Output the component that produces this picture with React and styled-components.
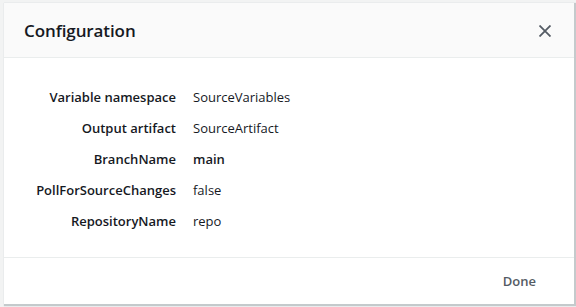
import React from "react";
import styled, { createGlobalStyle } from "styled-components";

const Global = createGlobalStyle`
  html, body {
    margin: 0;
    padding: 0;
    background: #f2f3f3;
    font-family: "Open Sans", "Liberation Sans", Arial, sans-serif;
  }
`;

const Page = styled.div`
  width: 576px;
  height: 307px;
  padding: 3px 2px 0 4px;
  box-sizing: border-box;
`;

const Modal = styled.div`
  width: 570px;
  height: 301px;
  background: #fff;
  display: flex;
  flex-direction: column;
  box-shadow: 1px 1px 1px 1px #c4cacc;
`;

const Header = styled.div`
  height: 55px;
  box-sizing: border-box;
  background: #fafafa;
  border-bottom: 1px solid #eaeded;
  display: flex;
  align-items: center;
  justify-content: space-between;
  padding: 1px 23px 0 20px;
`;

const Title = styled.h2`
  margin: 0;
  font-size: 17px;
  font-weight: 600;
  letter-spacing: -0.1px;
  color: #16191f;
`;

const CloseButton = styled.button`
  border: none;
  background: none;
  padding: 0;
  width: 12px;
  height: 12px;
  display: flex;
  cursor: pointer;
`;

const Body = styled.div`
  flex: 1;
  padding: 30px 0 0 0;
  border-bottom: 1px solid #eaeded;
`;

const Grid = styled.div`
  display: grid;
  grid-template-columns: 172px auto;
  column-gap: 17px;
  row-gap: 12px;
  font-size: 13px;
  line-height: 19px;
`;

const Label = styled.div`
  text-align: right;
  font-weight: 600;
  color: #16191f;
`;

const Value = styled.div`
  color: #16191f;
  font-weight: ${(p) => (p.$strong ? 600 : 400)};
`;

const Footer = styled.div`
  height: 46px;
  display: flex;
  align-items: center;
  justify-content: flex-end;
  padding: 0 38px;
`;

const DoneButton = styled.button`
  border: none;
  background: none;
  padding: 0;
  font-family: inherit;
  font-size: 13px;
  font-weight: 600;
  color: #545b64;
  cursor: pointer;
`;

const rows = [
  ["Variable namespace", "SourceVariables"],
  ["Output artifact", "SourceArtifact"],
  ["BranchName", "main", true],
  ["PollForSourceChanges", "false"],
  ["RepositoryName", "repo"],
];

export default function App() {
  return (
    <Page>
      <Global />
      <Modal>
        <Header>
          <Title>Configuration</Title>
          <CloseButton aria-label="Close">
            <svg width="12" height="12" viewBox="0 0 12 12">
              <path
                d="M0.5 0.5l11 11M11.5 0.5l-11 11"
                stroke="#545b64"
                strokeWidth="1.8"
                fill="none"
              />
            </svg>
          </CloseButton>
        </Header>
        <Body>
          <Grid>
            {rows.map(([k, v, strong]) => (
              <React.Fragment key={k}>
                <Label>{k}</Label>
                <Value $strong={strong}>{v}</Value>
              </React.Fragment>
            ))}
          </Grid>
        </Body>
        <Footer>
          <DoneButton>Done</DoneButton>
        </Footer>
      </Modal>
    </Page>
  );
}
